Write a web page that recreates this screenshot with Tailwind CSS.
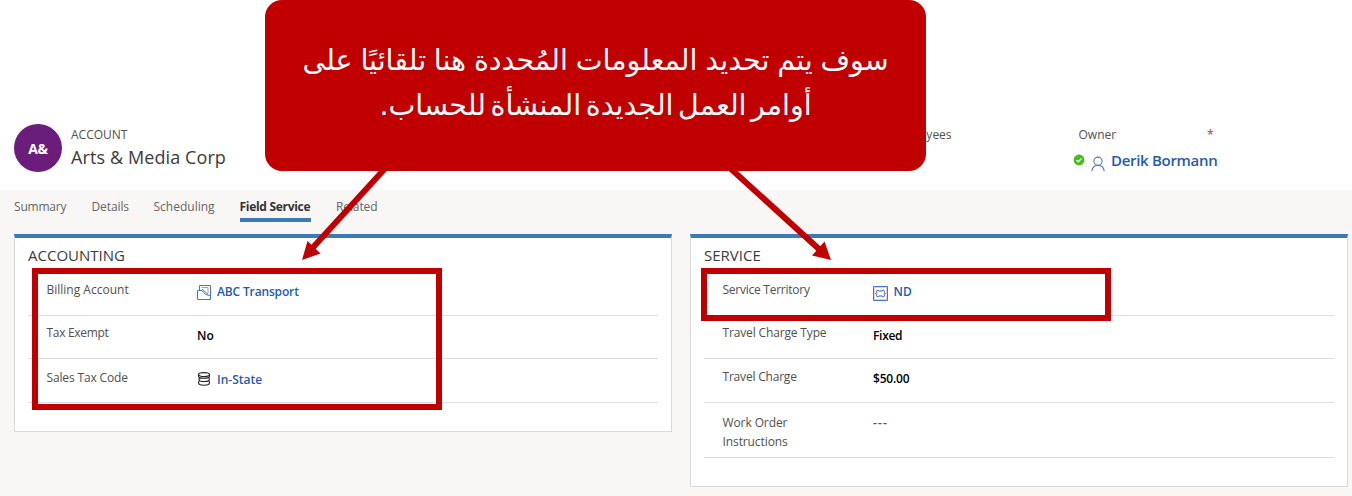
<!DOCTYPE html>
<html lang="ar">
<head>
<meta charset="utf-8">
<title>Arts &amp; Media Corp</title>
<script src="https://cdn.jsdelivr.net/npm/@tailwindcss/browser@4"></script>
</head>
<body class="relative w-[1352px] h-[496px] overflow-hidden bg-[#f8f7f6] font-['Open_Sans','Noto_Sans',sans-serif] text-[12px] leading-[18px] text-[#505050]">
<header class="flex h-[190px] items-start bg-white pt-[124px] pl-[14px]">
  <div class="flex size-12 items-center justify-center rounded-full bg-[#6b1d7c] pt-px text-[14px] font-bold tracking-[-0.3px] text-white">A&amp;</div>
  <div class="ml-[9px] w-[813.5px]">
    <div class="h-[20px] leading-[21px]">ACCOUNT</div>
    <div class="text-[18px] leading-[26px] tracking-[0.1px] text-[#3b3b3b]">Arts &amp; Media Corp</div>
  </div>
  <div class="w-[188px] pl-[6.5px] leading-[21px]">Employees</div>
  <div class="w-[147px]">
    <div class="flex justify-between pl-[6px] leading-[21px]"><span>Owner</span><span class="mr-[6px] text-[#e81c1c]">*</span></div>
    <div class="flex pt-[4px] text-[15px] leading-[22px] font-semibold tracking-[-0.3px] text-[#1f5bb0]">
      <svg class="mt-[5px] size-[12px]" viewBox="0 0 12 12"><circle cx="6" cy="6" r="5.4" fill="#45bd1d"/><path d="M3.5 6.1l1.8 1.7 3.2-3.3" fill="none" stroke="#fff" stroke-width="1.3"/></svg>
      <svg class="mt-[7px] ml-[6px] h-[16px] w-[14px]" viewBox="0 0 14 16" fill="none" stroke="#5d77c4" stroke-width="1.1"><circle cx="7" cy="5.2" r="4.1"/><path d="M.8 15.3C1.2 11.600 3.500 9.400 7 9.400s5.800 2.200 6.200 5.900"/></svg>
      <span class="ml-[6.5px] whitespace-nowrap">Derik Bormann</span>
    </div>
  </div>
</header>
<nav class="flex h-11 pt-[8px] pl-[14px] text-[#666]">
  <span class="w-[77.500px] tracking-[-0.2px]">Summary</span>
  <span class="w-[62px] tracking-[-0.1px]">Details</span>
  <span class="w-[86px]">Scheduling</span>
  <span class="mr-[25.500px] h-[23.500px] w-[71px] border-b-4 border-[#3b79b7] font-bold tracking-[-0.3px] whitespace-nowrap text-[#333]">Field Service</span>
  <span class="tracking-[-0.1px]">Related</span>
</nav>
<main class="flex items-start gap-[18px] pl-[14px]">
  <section class="h-[198px] w-[658px] border border-t-4 border-[#d9d9d9] border-t-[#3b79b7] bg-white px-[13px]">
    <h2 class="h-[33px] pt-[6px] text-[15px] leading-[22px] text-[#3b3b3b]">ACCOUNTING</h2>
    <div class="flex h-[45px] border-b border-[#dedede] pt-[10px] pl-[18.500px]">
      <span class="w-[150.500px]">Billing Account</span>
      <svg class="mt-[4px] mr-[6px] h-[15px] w-[14px]" viewBox="0 0 14 15" fill="none" stroke="#3f78c8" stroke-width="1"><path d="M4.500 2.500h6.500v6" stroke="#d98a8a"/><path d="M2.500 5.500V.500h11v14H.500v-9h4.500c2 3 4.500 5 8.500 5"/><path d="M5 4l6 5.500"/></svg>
      <span class="pt-[2px] font-semibold tracking-[-0.15px] text-[#1f5bb0]">ABC Transport</span>
    </div>
    <div class="flex h-[43px] border-b border-[#dedede] pt-[8px] pl-[18.500px]">
      <span class="w-[150.500px] tracking-[-0.3px]">Tax Exempt</span>
      <span class="pt-[3px] font-semibold text-black">No</span>
    </div>
    <div class="flex h-[44px] border-b border-[#dedede] pt-[10px] pl-[18.500px]">
      <span class="w-[150.500px] tracking-[-0.15px]">Sales Tax Code</span>
      <svg class="mt-[3px] mr-[6px] size-[14px]" viewBox="0 0 14 14" fill="none" stroke="#222" stroke-width="1.1"><ellipse cx="7" cy="2.600" rx="5.500" ry="2"/><path d="M1.500 2.700v1.600c0 1.100 2.400 2 5.500 2s5.500-.900 5.500-2V2.700M2.200 5.800l-.2 1.600c0 1.200 2.400 2.100 5.500 2.100s4.800-.9 4.800-2V5.800M2 8.800l-.5 2c0 1.400 2.400 2.400 5.500 2.400s5.500-1 5.500-2.400l-.4-2"/></svg>
      <span class="pt-[2px] font-semibold text-[#1f5bb0]">In-State</span>
    </div>
  </section>
  <section class="h-[253px] w-[658px] border border-t-4 border-[#d9d9d9] border-t-[#3b79b7] bg-white px-[13px]">
    <h2 class="h-[33px] pt-[6px] text-[15px] leading-[22px] text-[#3b3b3b]">SERVICE</h2>
    <div class="flex h-[45px] border-b border-[#dedede] pt-[10px] pl-[18.500px]">
      <span class="w-[150px] tracking-[-0.25px]">Service Territory</span>
      <svg class="mt-[5px] mr-[6px] size-[15px]" viewBox="0 0 15 15" fill="none"><path d="M.500 .500h14v14H.500z" stroke="#3f78c8"/><path d="M1.500 13.500v-12h12v12z" stroke="#f0b6b6" stroke-width=".7"/><path d="M4.500 4l1.500 1h3l1.500-1 1 1.500-.5 1 1.500 1-1.500 1 .5 1-1 1.500-1.500-1H6l-1.500 1-1-1.500.5-1-1.500-1 1.500-1-.5-1z" stroke="#2f64b8"/></svg>
      <span class="pt-[2px] font-semibold text-[#1f5bb0]">ND</span>
    </div>
    <div class="flex h-[43px] border-b border-[#dedede] pt-[8px] pl-[18.500px]">
      <span class="w-[150.500px] tracking-[-0.15px]">Travel Charge Type</span>
      <span class="pt-[3px] font-semibold tracking-[-0.3px] text-black">Fixed</span>
    </div>
    <div class="flex h-[44px] border-b border-[#dedede] pt-[9px] pl-[18.500px]">
      <span class="w-[150.500px] tracking-[-0.2px]">Travel Charge</span>
      <span class="pt-[2px] font-semibold tracking-[-0.2px] text-black">$50.00</span>
    </div>
    <div class="flex h-[55px] border-b border-[#dedede] pt-[10px] pl-[18.500px] leading-[19px]">
      <span class="w-[150.500px] tracking-[-0.1px]">Work Order<br>Instructions</span>
      <span class="font-semibold tracking-[1.200px]">---</span>
    </div>
  </section>
</main>

<!-- Annotation layer -->
<div class="absolute top-[268px] left-[32px] h-[142px] w-[410px] border-6 border-[#c00000]"></div>
<div class="absolute top-[268px] left-[701px] h-[53px] w-[410px] border-6 border-[#c00000]"></div>
<svg class="absolute top-0 left-0 h-[496px] w-[1352px]" viewBox="0 0 1352 496" fill="#c00000"><path d="M385.500 168L312 248.500M730 168L820 250" stroke="#c00000" stroke-width="6"/><path d="M302 260L307.500 241 320.500 253.500zM831 260L812 255.500 824.500 241.500z"/></svg>
<div dir="rtl" class="absolute top-0 left-[265px] flex h-[171px] w-[661px] items-center justify-center rounded-[17px] bg-[#c00000] pb-[5px] text-center font-['DejaVu_Sans',sans-serif] text-[28.500px] leading-[45px] whitespace-nowrap text-white"><p class="flex flex-col items-center"><span class="[word-spacing:-1.300px]">سوف يتم تحديد المعلومات المُحددة هنا تلقائيًا على</span><span class="[word-spacing:-4.500px]">أوامر العمل الجديدة المنشأة للحساب.</span></p></div>
</body>
</html>
